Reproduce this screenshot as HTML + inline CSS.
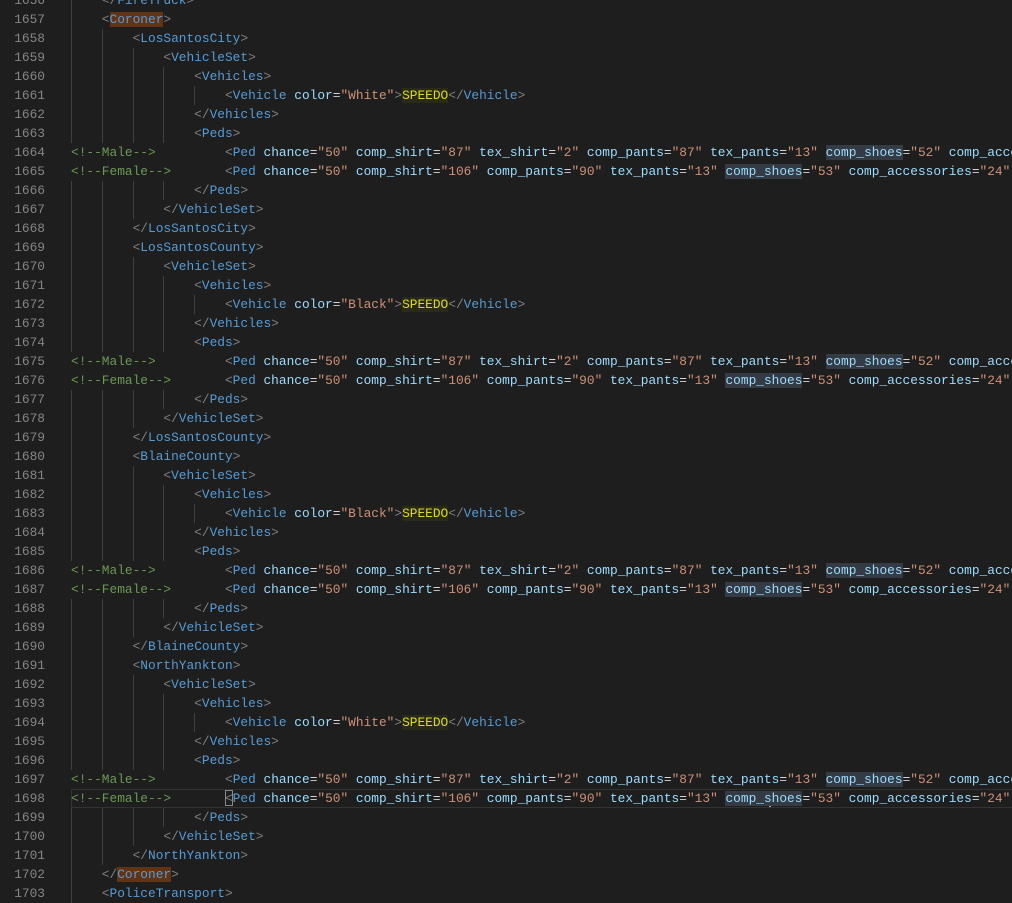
<!DOCTYPE html>
<html><head><meta charset="utf-8">
<style>
html,body{margin:0;padding:0;background:#1e1e1e;width:1012px;height:902px;overflow:hidden}
#ed{position:absolute;left:0;top:-9.5px;width:1012px}
.ln{position:relative;height:19px;line-height:19px;font-family:"Liberation Mono",monospace;font-size:12.83px;white-space:pre}
.num{position:absolute;left:0;width:45px;text-align:right;color:#858585}
.code{position:absolute;left:71px;right:0;overflow:hidden;color:#d4d4d4}
.g{position:absolute;top:0;width:1px;height:19px;background:#404040}
.b{color:#808080}.t{color:#569cd6}.a{color:#9cdcfe}.s{color:#ce9178}.c{color:#6a9955}.e{color:#d4d4d4}
.sp{color:#dcdc1e;background:#2a2a18}
.co{background:#623315}
.hl{background:#343b45}
.act{position:absolute;left:71px;right:-2px;top:0;height:17px;border:1px solid #333}
.cur{position:absolute;top:2px;width:2px;height:16px;background:#aeafad}
.bx{position:absolute;top:1px;height:16px;border:1px solid #888;box-sizing:border-box}
</style></head><body>
<div id="ed"></div>
<script>
var CW=12.83*0.6;
function tag(n,close,cls){return '<span class="b">&lt;'+(close?'/':'')+'</span><span class="t'+(cls?' '+cls:'')+'">'+n+'</span><span class="b">&gt;</span>';}
function at(n,v,hl){return '<span class="a'+(hl?' hl':'')+'">'+n+'</span><span class="e">=</span><span class="s">"'+v+'"</span>';}
function veh(c){return '<span class="b">&lt;</span><span class="t">Vehicle</span> '+at('color',c)+'<span class="b">&gt;</span><span class="sp">SPEEDO</span><span class="b">&lt;/</span><span class="t">Vehicle</span><span class="b">&gt;</span>';}
function male(){return '<span class="c">&lt;!--Male--&gt;</span>         <span class="b">&lt;</span><span class="t">Ped</span> '+at('chance','50')+' '+at('comp_shirt','87')+' '+at('tex_shirt','2')+' '+at('comp_pants','87')+' '+at('tex_pants','13')+' '+at('comp_shoes','52',1)+' '+at('comp_accessories','24')+' '+at('tex_accessories','0');}
function female(){return '<span class="c">&lt;!--Female--&gt;</span>       <span class="b">&lt;</span><span class="t">Ped</span> '+at('chance','50')+' '+at('comp_shirt','106')+' '+at('comp_pants','90')+' '+at('tex_pants','13')+' '+at('comp_shoes','53',1)+' '+at('comp_accessories','24')+' '+at('tex_accessories','0');}
var L=[];
function p(ind,h){L.push([ind,h]);}
p(1,tag('FireTruck',1));
p(1,tag('Coroner',0,'co'));
var regions=[['LosSantosCity','White'],['LosSantosCounty','Black'],['BlaineCounty','Black'],['NorthYankton','White']];
regions.forEach(function(r){
p(2,tag(r[0]));p(3,tag('VehicleSet'));p(4,tag('Vehicles'));p(5,veh(r[1]));p(4,tag('Vehicles',1));p(4,tag('Peds'));
p(-1,male());p(-1,female());p(4,tag('Peds',1));p(3,tag('VehicleSet',1));p(2,tag(r[0],1));
});
p(1,tag('Coroner',1,'co'));
p(1,tag('PoliceTransport'));
var out='';
L.forEach(function(l,i){
 var n=1656+i, ind=l[0], html=l[1];
 var g='';
 var lead=ind<0?0:ind;
 for(var k=0;k<lead;k++){g+='<div class="g" style="left:'+(71+k*4*CW).toFixed(1)+'px"></div>';}
 var pre=ind<0?'':' '.repeat(ind*4);
 var extra='';
 if(n==1698){extra='<div class="act"></div><div class="bx" style="left:'+(71+20*CW-0.5).toFixed(1)+'px;width:'+(CW+1).toFixed(1)+'px"></div><div class="cur" style="left:769px"></div>';}
 out+='<div class="ln">'+extra+'<span class="num">'+n+'</span>'+g+'<span class="code">'+pre+html+'</span></div>';
});
document.getElementById('ed').innerHTML=out;
</script>
</body></html>
